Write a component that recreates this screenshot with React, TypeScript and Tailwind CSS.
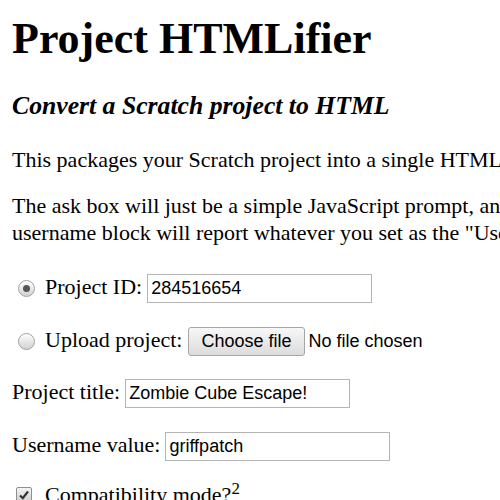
import type { ReactNode } from "react";

function Radio({ checked }: { checked?: boolean }) {
  return (
    <span className="ml-[6px] mr-[10px] inline-flex h-[17px] w-[17px] shrink-0 items-center justify-center self-center rounded-full border border-[#a0a0a0] bg-gradient-to-b from-[#fdfdfd] to-[#d2d2d2] shadow-[inset_0_1px_1px_rgba(255,255,255,0.8)]">
      {checked && <span className="h-[7px] w-[7px] rounded-full bg-[#555555]" />}
    </span>
  );
}

function TextField({ value }: { value: string }) {
  return (
    <input
      readOnly
      value={value}
      className="ml-[5px] h-[29px] w-[225px] border-[1.5px] border-[#b4b4b4] bg-white px-[3px] font-['Liberation_Sans',Arial,sans-serif] text-[18px] text-black outline-none"
    />
  );
}

function Row({ children, first }: { children: ReactNode; first?: boolean }) {
  return (
    <div className={first ? "mt-[28px] flex items-baseline leading-[22px]" : "mt-[23.5px] flex items-baseline leading-[22px]"}>
      {children}
    </div>
  );
}

export default function App() {
  return (
    <div className="h-[500px] w-[500px] overflow-hidden bg-white px-[12px] font-['Liberation_Serif','Times_New_Roman',serif] text-[22px] text-black">
      <div className="w-[760px]">
        <h1 className="mt-[14px] text-[44px] font-bold leading-[50px]">
          Project HTMLifier
        </h1>
        <h3 className="mt-[27px] text-[25.7px] font-bold italic leading-[30px]">
          Convert a Scratch project to HTML
        </h3>
        <p className="mt-[25px] whitespace-nowrap leading-[27px]">
          This packages your Scratch project into a single HTML file that can be run offline.
        </p>
        <p className="mt-[19px] leading-[27px]">
          The ask box will just be a simple JavaScript prompt, and the
          <br />
          username block will report whatever you set as the "Username value" field.
        </p>

        <Row first>
          <Radio checked />
          <span>Project ID:</span>
          <TextField value="284516654" />
        </Row>
        <Row>
          <Radio />
          <span>Upload project:</span>
          <span className="ml-[6px] flex h-[29px] items-center rounded-[3px] border border-[#a6a6a6] bg-gradient-to-b from-[#f7f7f7] to-[#dcdcdc] px-[12px] font-['Liberation_Sans',Arial,sans-serif] text-[18px] leading-none">
            Choose file
          </span>
          <span className="ml-[4px] font-['Liberation_Sans',Arial,sans-serif] text-[18px]">
            No file chosen
          </span>
        </Row>
        <Row>
          <span>Project title:</span>
          <TextField value="Zombie Cube Escape!" />
        </Row>
        <Row>
          <span>Username value:</span>
          <TextField value="griffpatch" />
        </Row>
        <Row>
          <span className="ml-[4px] mr-[13px] flex h-[16px] w-[16px] shrink-0 items-center justify-center self-center rounded-[2px] border border-[#8f8f8f] bg-gradient-to-b from-[#f4f4f4] to-[#cfcfcf]">
            <svg viewBox="0 0 12 12" className="h-[12px] w-[12px]">
              <path d="M2 6.5 L4.8 9.2 L10 2.5" fill="none" stroke="#333" strokeWidth="2.2" />
            </svg>
          </span>
          <span>
            Compatibility mode?<sup className="text-[17px]">2</sup>
          </span>
        </Row>
      </div>
    </div>
  );
}
